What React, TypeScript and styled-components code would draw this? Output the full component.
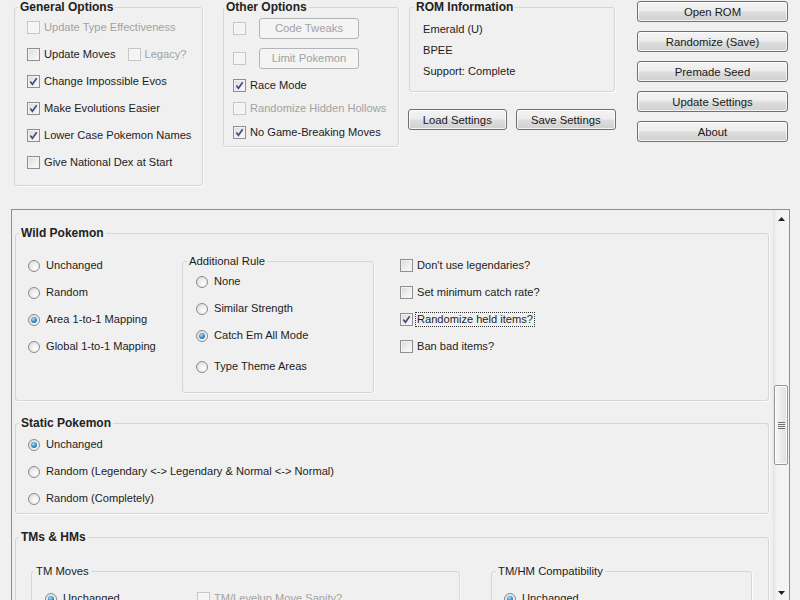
import styled, { createGlobalStyle } from 'styled-components';

const GlobalStyle = createGlobalStyle`
  html, body {
    margin: 0;
    padding: 0;
    background: #f0f0f0;
    overflow: hidden;
  }
  body {
    font-family: 'Liberation Sans', Arial, sans-serif;
    font-size: 11.1px;
    color: #1c1c1c;
  }
`;

const Window = styled.div`
  width: 800px;
  height: 600px;
  overflow: hidden;
  background: #f0f0f0;
`;

const TopBar = styled.div`
  display: flex;
  align-items: flex-start;
  height: 209px;
  padding-left: 14px;
  box-sizing: border-box;
`;

const Group = styled.fieldset<{ $w: number; $h?: number; $mt?: number; $ml?: number; $pb?: number }>`
  box-sizing: border-box;
  width: ${p => p.$w}px;
  ${p => (p.$h ? `height: ${p.$h}px;` : '')}
  margin: ${p => p.$mt ?? 0}px 0 0 ${p => p.$ml ?? 0}px;
  padding: 0 4px ${p => p.$pb ?? 0}px;
  min-width: 0;
  flex-shrink: 0;
  border: 1px solid #d3d7da;
  border-radius: 3px;
  box-shadow: 1px 1px 0 #fbfbfb;
`;

const Title = styled.legend<{ $bold?: boolean; $shift?: number }>`
  padding: 0 2px;
  margin-left: ${p => p.$shift ?? 0}px;
  line-height: 14px;
  font-size: ${p => (p.$bold ? 12 : 11.3)}px;
  font-weight: ${p => (p.$bold ? 700 : 400)};
  color: ${p => (p.$bold ? '#222' : '#1c1c1c')};
`;

const Stack = styled.div<{ $pl?: number; $pt?: number; $w?: number; $ml?: number }>`
  display: flex;
  flex-direction: column;
  box-sizing: border-box;
  flex-shrink: 0;
  ${p => (p.$w ? `width: ${p.$w}px;` : '')}
  margin-left: ${p => p.$ml ?? 0}px;
  padding: ${p => p.$pt ?? 0}px 0 0 ${p => p.$pl ?? 0}px;
`;

const Row = styled.div<{ $h?: number }>`
  display: flex;
  align-items: center;
  height: ${p => p.$h ?? 27}px;
`;

const Choice = styled.label<{ $gap: number; $ml?: number }>`
  display: inline-flex;
  align-items: center;
  gap: ${p => p.$gap}px;
  margin-left: ${p => p.$ml ?? 0}px;
  white-space: nowrap;
`;

const CheckBox = styled.span<{ $disabled?: boolean }>`
  display: inline-flex;
  align-items: center;
  justify-content: center;
  flex-shrink: 0;
  box-sizing: border-box;
  width: 13px;
  height: 13px;
  border: 1px solid ${p => (p.$disabled ? '#c6c6c6' : '#8e8f8f')};
  background: ${p =>
    p.$disabled ? '#f4f4f4' : 'linear-gradient(135deg, #d9d9d9 0%, #eeeeee 55%, #fafafa 100%)'};
  box-shadow: inset 0 0 0 1px ${p => (p.$disabled ? '#f7f7f7' : '#f2f2f2')};
`;

const RadioBox = styled.span<{ $on?: boolean }>`
  display: inline-flex;
  align-items: center;
  justify-content: center;
  flex-shrink: 0;
  box-sizing: border-box;
  width: 12px;
  height: 12px;
  border-radius: 50%;
  border: 1px solid #8a8a8a;
  background: radial-gradient(circle at 65% 65%, #ffffff 0%, #e9e9e9 55%, #d2d2d2 100%);

  &::after {
    content: '';
    display: ${p => (p.$on ? 'block' : 'none')};
    width: 6px;
    height: 6px;
    border-radius: 50%;
    background: radial-gradient(circle at 40% 35%, #a6e0fb 0%, #3a8dc6 50%, #1b4f7e 100%);
  }
`;

const Label = styled.span<{ $disabled?: boolean; $focus?: boolean }>`
  color: ${p => (p.$disabled ? '#a2a2a2' : '#1c1c1c')};
  line-height: 13px;
  padding: 0 1px;
  margin-left: -1px;
  border: 1px ${p => (p.$focus ? 'dotted #333' : 'solid transparent')};
`;

const InfoLine = styled.div`
  display: flex;
  align-items: center;
  height: 21px;
`;

const Button = styled.button<{ $w?: number; $ml?: number }>`
  box-sizing: border-box;
  width: ${p => (p.$w ? `${p.$w}px` : '100%')};
  height: 21px;
  margin-left: ${p => p.$ml ?? 0}px;
  padding: 0;
  border: 1px solid #707070;
  border-radius: 3px;
  background: linear-gradient(#f4f4f4 0%, #ececec 48%, #dddddd 52%, #d1d1d1 100%);
  box-shadow: inset 0 0 0 1px rgba(255, 255, 255, 0.75);
  font-family: 'Liberation Sans', Arial, sans-serif;
  font-size: 11.3px;
  color: #1a1a1a;

  &:disabled {
    border-color: #b3b6b8;
    background: #f4f4f4;
    box-shadow: none;
    color: #a2a2a2;
  }
`;

const Column = styled.div<{ $w: number; $ml: number; $gap?: number; $mt?: number }>`
  display: flex;
  flex-direction: column;
  flex-shrink: 0;
  width: ${p => p.$w}px;
  margin: ${p => p.$mt ?? 0}px 0 0 ${p => p.$ml}px;
  gap: ${p => p.$gap ?? 0}px;
`;

const ButtonPair = styled.div`
  display: flex;
  gap: 9px;
  margin-top: 17px;
`;

const ScrollPane = styled.div`
  display: flex;
  box-sizing: border-box;
  margin-left: 11px;
  width: 779px;
  height: 393px;
  border: 1px solid #8a8e94;
  background: #f0f0f0;
`;

const ScrollContent = styled.div`
  flex: 1;
  overflow: hidden;
  padding-left: 3px;
`;

const Panels = styled.div`
  display: flex;
  flex-direction: column;
`;

const Split = styled.div`
  display: flex;
  align-items: flex-start;
`;

const ScrollBar = styled.div`
  display: flex;
  flex-direction: column;
  width: 17px;
  flex-shrink: 0;
  background: linear-gradient(to right, #e4e4e4 0%, #f3f3f3 25%, #f5f5f5 100%);
  border-left: 1px solid #ececec;
  box-sizing: border-box;
`;

const ArrowButton = styled.div`
  display: flex;
  align-items: center;
  justify-content: center;
  height: 17px;
  flex-shrink: 0;
`;

const Track = styled.div`
  flex: 1;
  display: flex;
  flex-direction: column;
`;

const Thumb = styled.div<{ $top: number; $h: number }>`
  box-sizing: border-box;
  margin: ${p => p.$top}px 0 0 1px;
  width: 14px;
  height: ${p => p.$h}px;
  border: 1px solid #979797;
  border-radius: 2px;
  background: linear-gradient(to right, #f7f7f7 0%, #ececec 50%, #dedede 100%);
  box-shadow: inset 0 0 0 1px rgba(255, 255, 255, 0.8);
  display: flex;
  align-items: center;
  justify-content: center;
`;

const Grip = styled.div`
  width: 7px;
  height: 7px;
  background: repeating-linear-gradient(#6f6f6f 0 1px, #f2f2f2 1px 2px);
`;

const CheckMark = () => (
  <svg width="11" height="11" viewBox="0 0 11 11">
    <path d="M2.3 5.6 L4.4 8.3 L8.7 2.2" fill="none" stroke="#3c4d7c" strokeWidth="1.6" />
  </svg>
);

const Arrow = ({ down }: { down?: boolean }) => (
  <svg width="7" height="4" viewBox="0 0 7 4">
    <path d={down ? 'M0 0 H7 L3.5 4 Z' : 'M0 4 H7 L3.5 0 Z'} fill="#222" />
  </svg>
);

type OptionProps = {
  radio?: boolean;
  label: string;
  on?: boolean;
  disabled?: boolean;
  focus?: boolean;
  ml?: number;
};

const Option = ({ radio, label, on, disabled, focus, ml }: OptionProps) => (
  <Choice $gap={radio ? 5 : 3} $ml={ml}>
    {radio ? (
      <RadioBox $on={on} />
    ) : (
      <CheckBox $disabled={disabled}>{on && <CheckMark />}</CheckBox>
    )}
    <Label $disabled={disabled} $focus={focus}>
      {label}
    </Label>
  </Choice>
);

export default function App() {
  return (
    <Window>
      <GlobalStyle />
      <TopBar>
        <Group $w={189} $h={186}>
          <Title $bold $shift={-1}>General Options</Title>
          <Stack $pl={8}>
            <Row><Option label="Update Type Effectiveness" disabled /></Row>
            <Row>
              <Option label="Update Moves" />
              <Option label="Legacy?" disabled ml={10} />
            </Row>
            <Row><Option label="Change Impossible Evos" on /></Row>
            <Row><Option label="Make Evolutions Easier" on /></Row>
            <Row><Option label="Lower Case Pokemon Names" on /></Row>
            <Row><Option label="Give National Dex at Start" /></Row>
          </Stack>
        </Group>

        <Group $w={176} $h={147} $ml={20}>
          <Title $bold $shift={-4}>Other Options</Title>
          <Stack $pl={5}>
            <Row $h={28}>
              <CheckBox $disabled />
              <Button $w={100} $ml={13} disabled>Code Tweaks</Button>
            </Row>
            <Row $h={32}>
              <CheckBox $disabled />
              <Button $w={100} $ml={13} disabled>Limit Pokemon</Button>
            </Row>
            <Row $h={22}><Option label="Race Mode" on /></Row>
            <Row $h={24}><Option label="Randomize Hidden Hollows" disabled /></Row>
            <Row $h={24}><Option label="No Game-Breaking Moves" on /></Row>
          </Stack>
        </Group>

        <Column $w={208} $ml={9}>
          <Group $w={206} $h={92} $ml={1}>
            <Title $bold>ROM Information</Title>
            <Stack $pl={9} $pt={4}>
              <InfoLine>Emerald (U)</InfoLine>
              <InfoLine>BPEE</InfoLine>
              <InfoLine>Support: Complete</InfoLine>
            </Stack>
          </Group>
          <ButtonPair>
            <Button $w={99}>Load Settings</Button>
            <Button $w={101}>Save Settings</Button>
          </ButtonPair>
        </Column>

        <Column $w={151} $ml={21} $gap={9} $mt={1}>
          <Button>Open ROM</Button>
          <Button>Randomize (Save)</Button>
          <Button>Premade Seed</Button>
          <Button>Update Settings</Button>
          <Button>About</Button>
        </Column>
      </TopBar>

      <ScrollPane>
        <ScrollContent>
          <Panels>
            <Group $w={754} $mt={16} $pb={7}>
              <Title $bold $shift={-1}>Wild Pokemon</Title>
              <Split>
                <Stack $w={162} $pl={8} $pt={12}>
                  <Row><Option radio label="Unchanged" /></Row>
                  <Row><Option radio label="Random" /></Row>
                  <Row><Option radio label="Area 1-to-1 Mapping" on /></Row>
                  <Row><Option radio label="Global 1-to-1 Mapping" /></Row>
                </Stack>
                <Group $w={192} $mt={14} $pb={8}>
                  <Title>Additional Rule</Title>
                  <Stack $pl={9}>
                    <Row><Option radio label="None" /></Row>
                    <Row><Option radio label="Similar Strength" /></Row>
                    <Row><Option radio label="Catch Em All Mode" on /></Row>
                    <Row $h={35}><Option radio label="Type Theme Areas" /></Row>
                  </Stack>
                </Group>
                <Stack $ml={26} $pt={12}>
                  <Row><Option label="Don't use legendaries?" /></Row>
                  <Row><Option label="Set minimum catch rate?" /></Row>
                  <Row><Option label="Randomize held items?" on focus /></Row>
                  <Row><Option label="Ban bad items?" /></Row>
                </Stack>
              </Split>
            </Group>

            <Group $w={754} $mt={15} $pb={1}>
              <Title $bold $shift={-1}>Static Pokemon</Title>
              <Stack $pl={8} $pt={1}>
                <Row><Option radio label="Unchanged" on /></Row>
                <Row><Option radio label="Random (Legendary <-> Legendary & Normal <-> Normal)" /></Row>
                <Row><Option radio label="Random (Completely)" /></Row>
              </Stack>
            </Group>

            <Group $w={754} $mt={16} $pb={10}>
              <Title $bold $shift={-1}>TMs &amp; HMs</Title>
              <Split>
                <Group $w={429} $mt={20} $ml={11} $pb={8}>
                  <Title $shift={-2}>TM Moves</Title>
                  <Split>
                    <Stack $w={161} $pl={9} $pt={7}>
                      <Row><Option radio label="Unchanged" on /></Row>
                      <Row><Option radio label="Random" /></Row>
                    </Stack>
                    <Stack $pt={7}>
                      <Row><Option label="TM/Levelup Move Sanity?" disabled /></Row>
                      <Row><Option label="Keep Field Move TMs?" disabled /></Row>
                    </Stack>
                  </Split>
                </Group>
                <Group $w={261} $mt={20} $ml={31} $pb={8}>
                  <Title>TM/HM Compatibility</Title>
                  <Stack $pl={8} $pt={7}>
                    <Row><Option radio label="Unchanged" on /></Row>
                    <Row><Option radio label="Random (prefer same type)" /></Row>
                    <Row><Option radio label="Random (completely)" /></Row>
                    <Row><Option radio label="Full Compatibility" /></Row>
                  </Stack>
                </Group>
              </Split>
            </Group>
          </Panels>
        </ScrollContent>

        <ScrollBar>
          <ArrowButton><Arrow /></ArrowButton>
          <Track>
            <Thumb $top={158} $h={80}>
              <Grip />
            </Thumb>
          </Track>
          <ArrowButton><Arrow down /></ArrowButton>
        </ScrollBar>
      </ScrollPane>
    </Window>
  );
}
